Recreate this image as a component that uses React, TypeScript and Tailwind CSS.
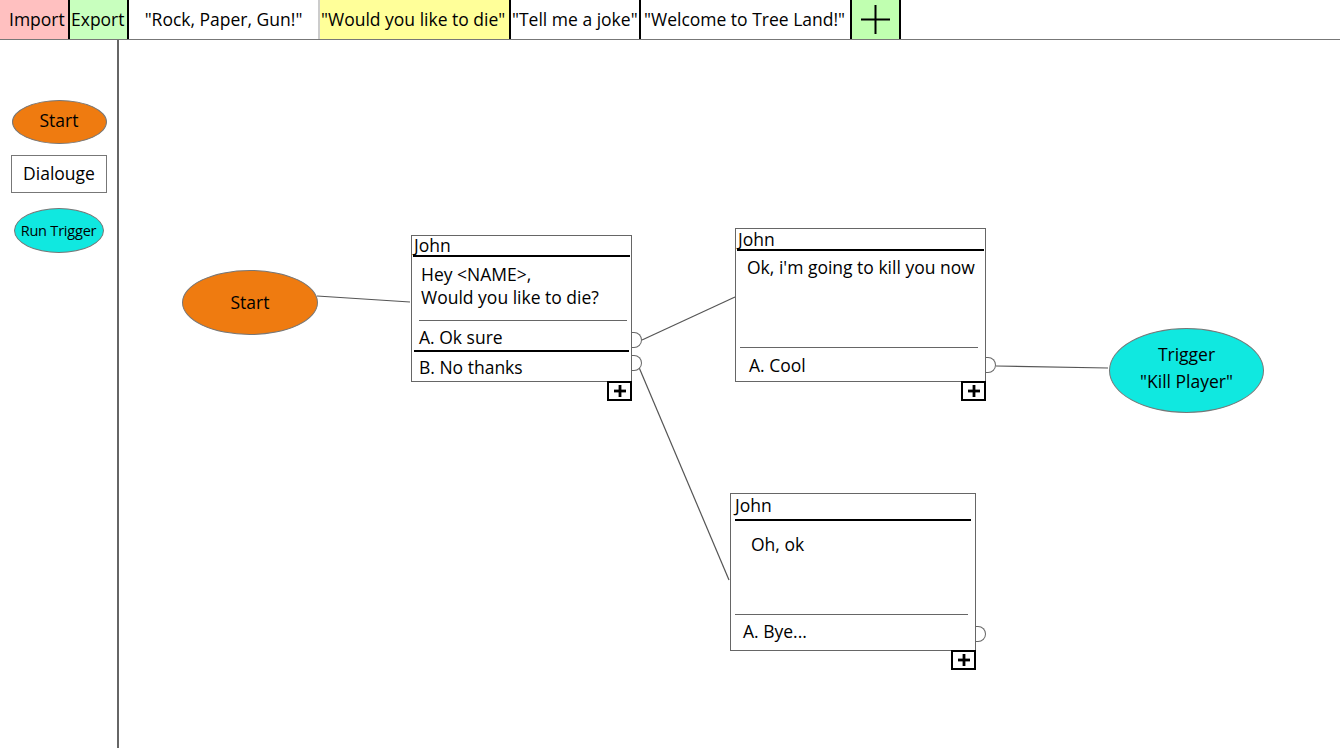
import React from "react";

const OX = 119;
const OY = 40;

function Plus({ size = 14, stroke = 2, pad = 1 }: { size?: number; stroke?: number; pad?: number }) {
  const c = size / 2;
  return (
    <svg width={size} height={size} viewBox={`0 0 ${size} ${size}`}>
      <line x1={c} y1={pad} x2={c} y2={size - pad} stroke="#000" strokeWidth={stroke} />
      <line x1={pad} y1={c} x2={size - pad} y2={c} stroke="#000" strokeWidth={stroke} />
    </svg>
  );
}

function Connector({ top }: { top: number }) {
  return (
    <div
      className="absolute w-[10px] h-[16px] border border-l-0 border-[#666] rounded-r-full bg-white"
      style={{ right: -11, top }}
    />
  );
}

function AddBox() {
  return (
    <div className="absolute right-[-1px] bottom-[-20px] w-[25px] h-[20px] border-2 border-black bg-white flex items-center justify-center">
      <Plus size={14} stroke={2.8} pad={1} />
    </div>
  );
}

export default function App() {
  const tab = "h-full flex items-center border-r-2 border-black text-[17.5px] whitespace-nowrap";
  return (
    <div
      className="w-[1340px] h-[748px] bg-white text-black overflow-hidden flex flex-col"
      style={{ fontFamily: '"Open Sans", "Noto Sans", sans-serif' }}
    >
      {/* Top bar */}
      <div className="h-[40px] border-b border-[#777] flex shrink-0">
        <div className="flex h-[39px]">
          <div className={`${tab} w-[70px] bg-[#ffc0c0] pl-[9px]`}>Import</div>
          <div className={`${tab} w-[59px] bg-[#c8ffbe] pl-[1px]`}>Export</div>
          <div className={`${tab} w-[191px] bg-white justify-center border-r border-r-[#ccc]`}>"Rock, Paper, Gun!"</div>
          <div className={`${tab} w-[191px] bg-[#ffff99] pl-[1px]`}>"Would you like to die"</div>
          <div className={`${tab} w-[130px] bg-white pl-[1px]`}>"Tell me a joke"</div>
          <div className={`${tab} w-[211px] bg-white pl-[3px]`}>"Welcome to Tree Land!"</div>
          <div className={`${tab} w-[49px] bg-[#c0ffb0] justify-center`}>
            <Plus size={31} stroke={2} pad={1} />
          </div>
        </div>
      </div>

      <div className="flex flex-1">
        {/* Sidebar */}
        <div className="w-[119px] border-r-2 border-[#666] flex flex-col items-center pt-[60px] shrink-0">
          <div className="w-[95px] h-[44px] rounded-[50%] bg-[#ef7b10] border border-[#777] flex items-center justify-center text-[17.5px] ml-[1px] pb-[4px]">
            Start
          </div>
          <div className="mt-[11px] w-[96px] h-[38px] border border-[#777] bg-white flex items-center justify-center text-[17.5px] ml-[1px] pb-[2px]">
            Dialouge
          </div>
          <div className="mt-[15px] w-[90px] h-[45px] rounded-[50%] bg-[#10e8e0] border border-[#777] flex items-center justify-center text-[14.5px] tracking-[-0.2px]">
            Run Trigger
          </div>
        </div>

        {/* Canvas */}
        <div className="relative flex-1">
          <svg className="absolute inset-0" width={1221} height={708}>
            <g stroke="#555" strokeWidth="1.2" fill="none">
              <line x1={317 - OX} y1={296 - OY} x2={410 - OX} y2={302 - OY} />
              <line x1={642 - OX} y1={340 - OY} x2={735 - OX} y2={297 - OY} />
              <line x1={638 - OX} y1={365 - OY} x2={729 - OX} y2={580 - OY} />
              <line x1={996 - OX} y1={366 - OY} x2={1108 - OX} y2={368 - OY} />
            </g>
          </svg>

          {/* Start node */}
          <div
            className="absolute w-[136px] h-[65px] rounded-[50%] bg-[#ef7b10] border border-[#777] flex items-center justify-center text-[17.5px]"
            style={{ left: 182 - OX, top: 270 - OY }}
          >
            Start
          </div>

          {/* Node 1 */}
          <div
            className="absolute w-[221px] h-[147px] border border-[#666] bg-white flex flex-col text-[17.5px] leading-[23px]"
            style={{ left: 411 - OX, top: 235 - OY }}
          >
            <div className="h-[19px] pl-[2px] flex items-center">John</div>
            <div className="h-[2px] bg-black mx-[1px]" />
            <div className="h-[63px] pl-[9px] pt-[6px]">
              <div>Hey &lt;NAME&gt;,</div>
              <div>Would you like to die?</div>
            </div>
            <div className="h-px bg-[#666] ml-[7px] mr-[4px]" />
            <div className="h-[29px] pl-[7px] flex items-center pt-[4px]">A. Ok sure</div>
            <div className="h-[2px] bg-black ml-[2px] mr-[2px]" />
            <div className="flex-1 pl-[7px] flex items-center pt-[2px]">B. No thanks</div>
            <Connector top={96} />
            <Connector top={119} />
            <AddBox />
          </div>

          {/* Node 2 */}
          <div
            className="absolute w-[251px] h-[154px] border border-[#666] bg-white flex flex-col text-[17.5px] leading-[23px]"
            style={{ left: 735 - OX, top: 228 - OY }}
          >
            <div className="h-[20px] pl-[2px] flex items-center">John</div>
            <div className="h-[2px] bg-black mx-[1px]" />
            <div className="h-[96px] pl-[11px] pt-[5px]">Ok, i'm going to kill you now</div>
            <div className="h-px bg-[#666] ml-[4px] mr-[7px]" />
            <div className="flex-1 pl-[13px] flex items-center pt-[2px]">A. Cool</div>
            <Connector top={128} />
            <AddBox />
          </div>

          {/* Node 3 */}
          <div
            className="absolute w-[246px] h-[158px] border border-[#666] bg-white flex flex-col text-[17.5px] leading-[23px]"
            style={{ left: 730 - OX, top: 493 - OY }}
          >
            <div className="h-[25px] pl-[4px] flex items-center pb-[2px]">John</div>
            <div className="h-[2px] bg-black ml-[4px] mr-[4px]" />
            <div className="h-[93px] pl-[20px] pt-[12px]">Oh, ok</div>
            <div className="h-px bg-[#666] ml-[4px] mr-[7px]" />
            <div className="flex-1 pl-[12px] flex items-center pb-[3px]">A. Bye...</div>
            <Connector top={132} />
            <AddBox />
          </div>

          {/* Trigger */}
          <div
            className="absolute w-[155px] h-[85px] rounded-[50%] bg-[#10e8e0] border border-[#777] flex flex-col items-center justify-center text-[17.5px] leading-[27px] pb-[6px]"
            style={{ left: 1109 - OX, top: 328 - OY }}
          >
            <div>Trigger</div>
            <div>"Kill Player"</div>
          </div>
        </div>
      </div>
    </div>
  );
}
